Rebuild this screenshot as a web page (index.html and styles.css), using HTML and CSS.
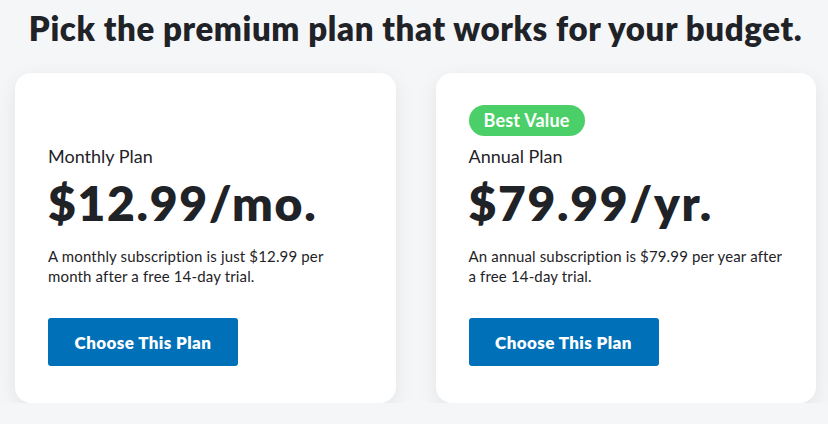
FILE: index.html
```html
<!DOCTYPE html>
<html>
  <head>
    <meta charset="UTF-8">
    <title>Choose a plan</title>
    <link rel="stylesheet" href="styles.css">
  </head>
  <body>
    <div class="page">
      <h1 class="title">Pick the premium plan that works for your budget.</h1>
      <div class="plans">
        <div class="plan">
          <div class="badge-slot"></div>
          <div class="plan-name">Monthly Plan</div>
          <div class="price">$12.99/mo.</div>
          <p class="desc">A monthly subscription is just $12.99 per<br>month after a free 14-day trial.</p>
          <button class="choose">Choose This Plan</button>
        </div>
        <div class="plan">
          <div class="badge-slot"><span class="badge">Best Value</span></div>
          <div class="plan-name">Annual Plan</div>
          <div class="price">$79.99/yr.</div>
          <p class="desc">An annual subscription is $79.99 per year after<br>a free 14-day trial.</p>
          <button class="choose">Choose This Plan</button>
        </div>
      </div>
    </div>
  </body>
</html>
```

FILE: styles.css
```css
body {
    margin: 0;
    background-color: #f5f6f8;
    font-family: Lato, "Liberation Sans", sans-serif;
    color: #1f2327;
}
.page {
    padding: 8px 12px 0 15px;
}
.title {
    margin: 0;
    text-align: center;
    font-size: 33px;
    font-weight: 800;
    line-height: 40px;
    letter-spacing: 0.6px;
}
.plans {
    display: flex;
    gap: 40px;
    margin-top: 25px;
}
.plan {
    flex: 1;
    background-color: #fff;
    border-radius: 16px;
    box-shadow: 0 6px 20px rgba(0, 0, 0, 0.08);
    padding: 32px 33px 37px 33px;
}
.badge-slot {
    height: 31px;
}
.badge {
    display: inline-block;
    height: 31px;
    line-height: 31px;
    padding: 0 15px;
    border-radius: 16px;
    background-color: #4bcf69;
    color: #fff;
    font-size: 18px;
    font-weight: 700;
    letter-spacing: 0.2px;
}
.plan-name {
    margin-top: 9px;
    font-size: 18px;
    line-height: 22px;
}
.price {
    margin-top: 8px;
    font-size: 48px;
    font-weight: 800;
    line-height: 56px;
    letter-spacing: 1.7px;
}
.desc {
    margin: 15px 0 0 0;
    font-size: 15px;
    line-height: 20px;
    letter-spacing: 0.15px;
}
.choose {
    display: block;
    margin-top: 32px;
    width: 190px;
    height: 48px;
    border: none;
    border-radius: 3px;
    background-color: #0071b9;
    color: #fff;
    font-family: Lato, "Liberation Sans", sans-serif;
    font-size: 17px;
    font-weight: 800;
    letter-spacing: 0.4px;
}
```
